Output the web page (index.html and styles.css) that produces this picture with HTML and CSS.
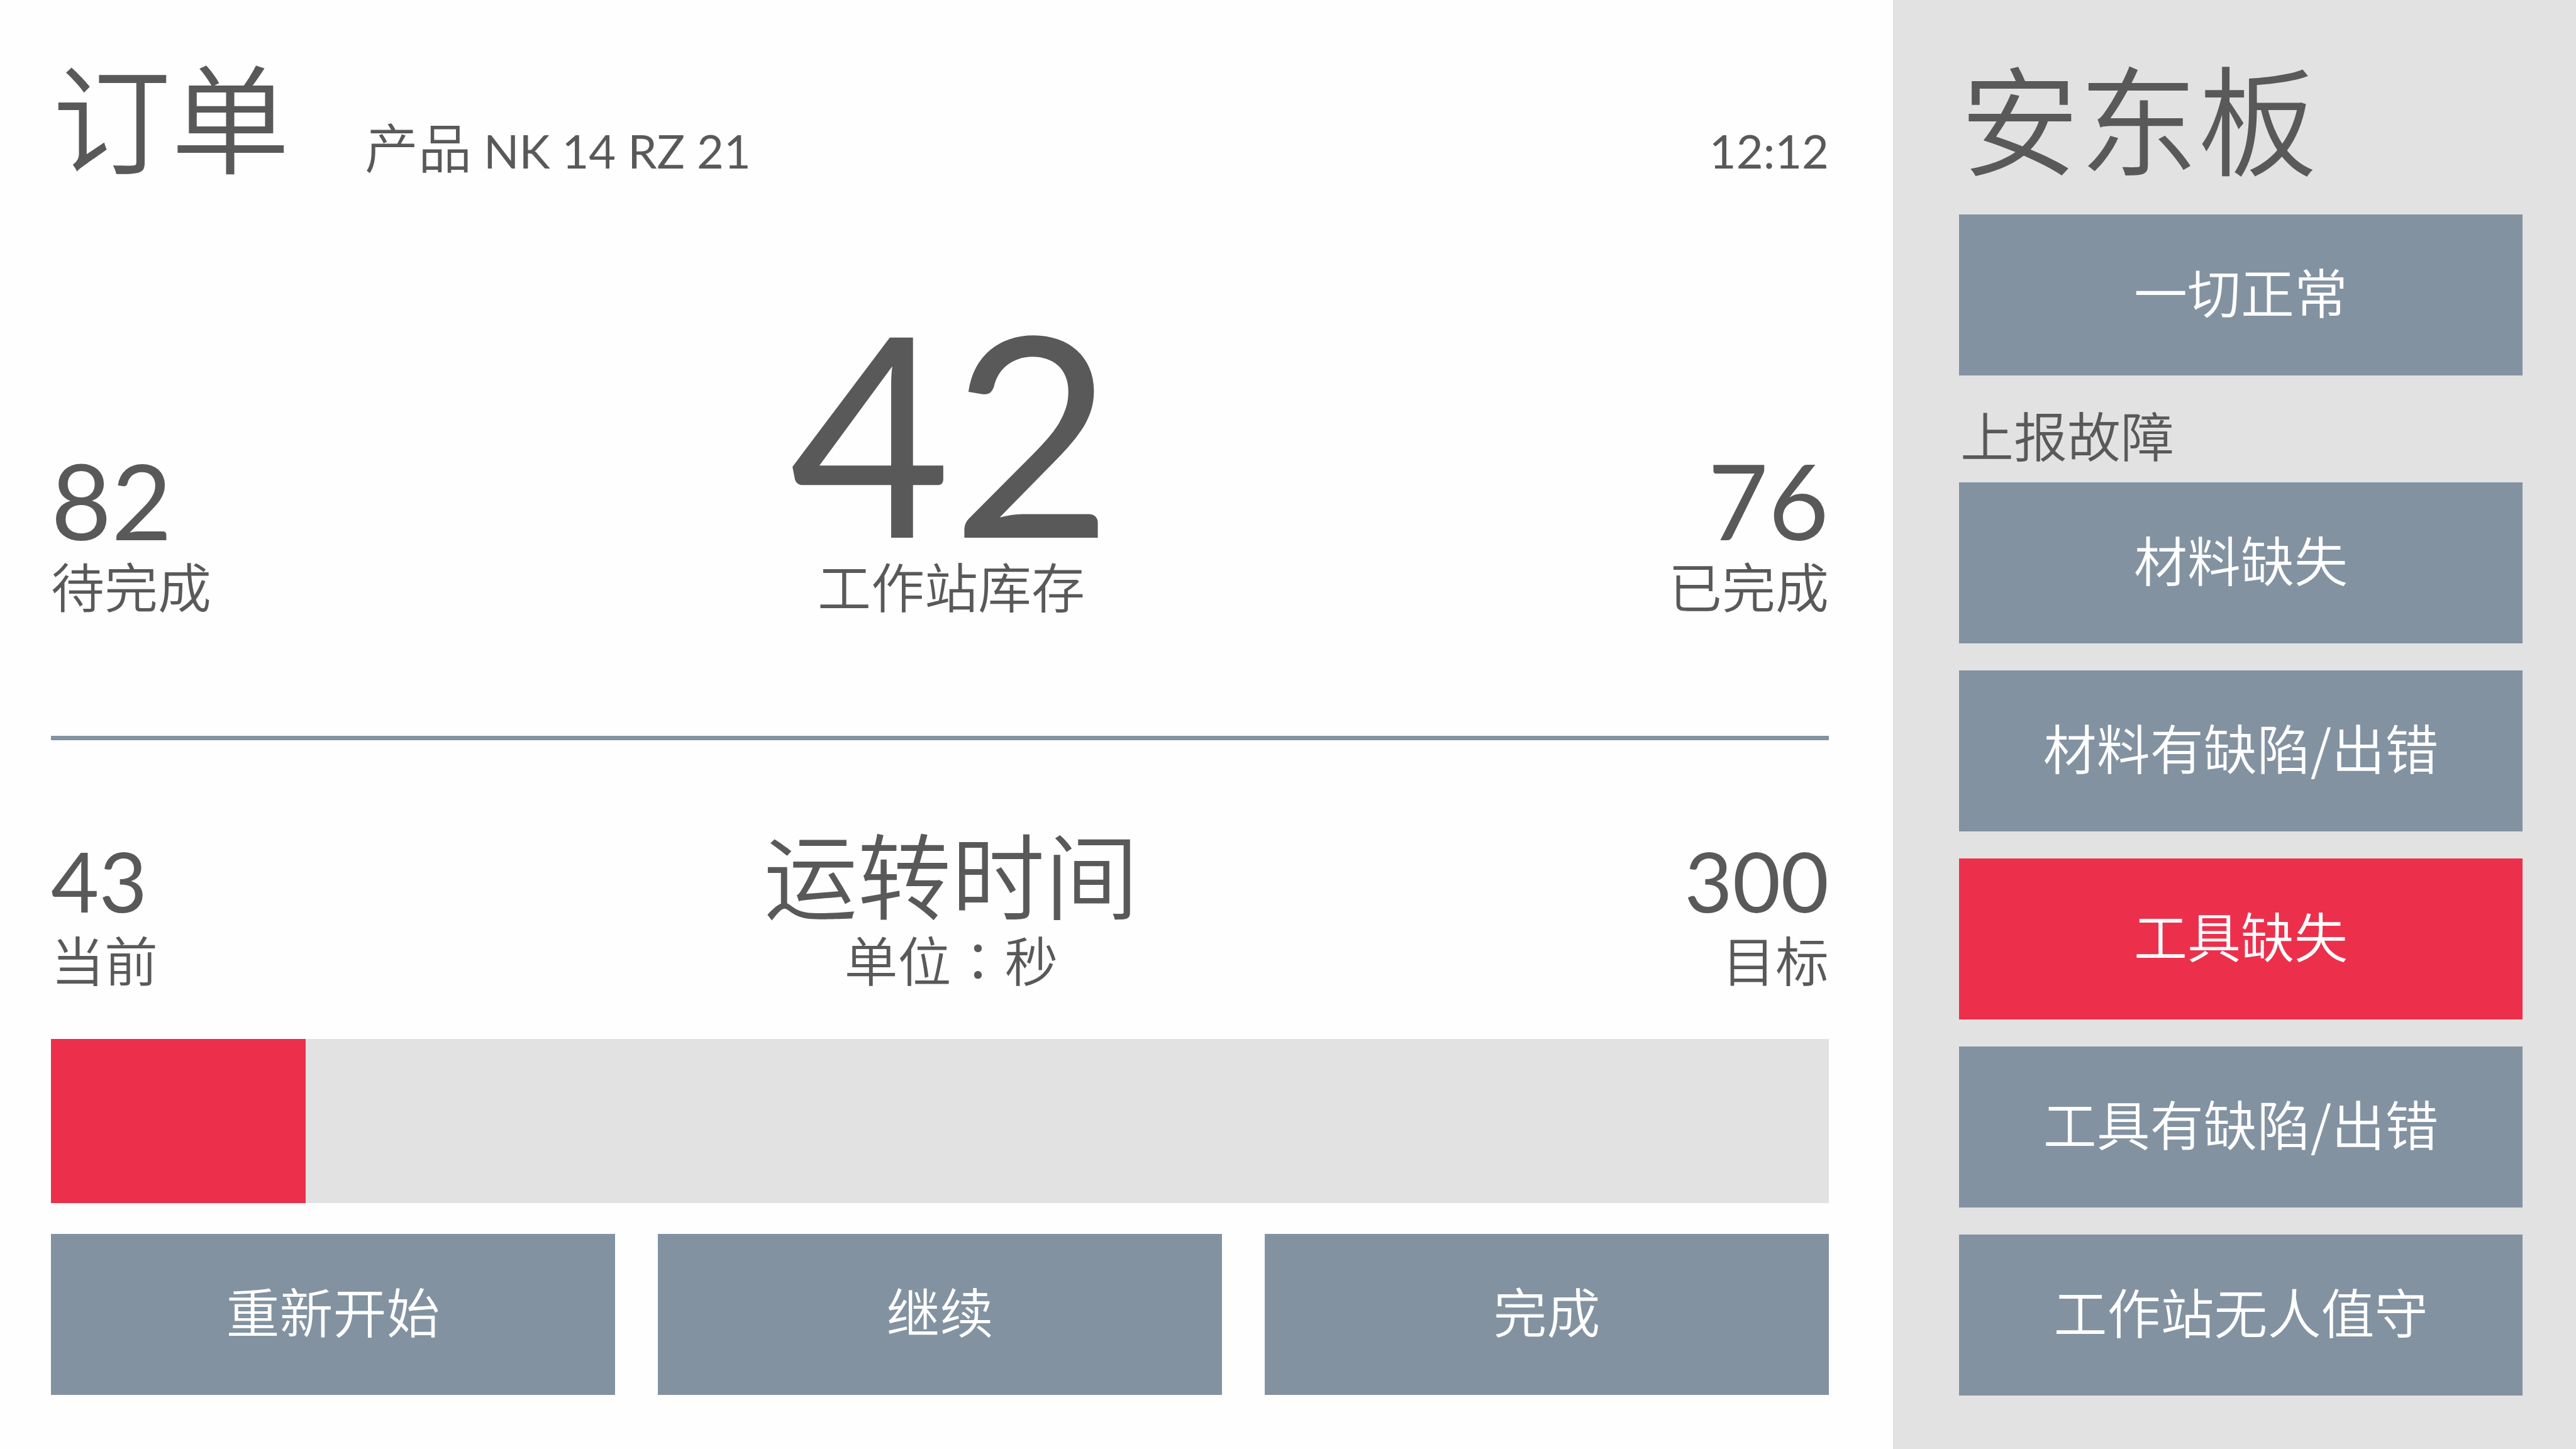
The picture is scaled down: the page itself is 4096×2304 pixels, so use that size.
FILE: index.html
```html
<!DOCTYPE html>
<html lang="zh-CN">
<head>
<meta charset="utf-8">
<meta name="viewport" content="width=device-width, initial-scale=1">
<title>订单</title>
<link rel="stylesheet" href="styles.css">
</head>
<body>
<div class="terminal">
  <main class="order">
    <header class="order-head">
      <h1 class="title">订单</h1>
      <p class="product">产品 <span class="code">NK 14 RZ 21</span></p>
      <time class="clock">12:12</time>
    </header>

    <section class="stats stock">
      <div class="stat">
        <span class="value">82</span>
        <span class="label">待完成</span>
      </div>
      <div class="stat stat-center">
        <span class="value value-hero">42</span>
        <span class="label">工作站库存</span>
      </div>
      <div class="stat stat-end">
        <span class="value">76</span>
        <span class="label">已完成</span>
      </div>
    </section>

    <hr class="divider">

    <section class="stats cycle">
      <div class="stat">
        <span class="value value-small">43</span>
        <span class="label">当前</span>
      </div>
      <div class="stat stat-center">
        <h2 class="subtitle" id="cycle-title">运转时间</h2>
        <span class="label">单位<span class="colon" lang="zh-Hant">：</span>秒</span>
      </div>
      <div class="stat stat-end">
        <span class="value value-small">300</span>
        <span class="label">目标</span>
      </div>
    </section>

    <progress class="cycle-bar" value="43" max="300" aria-labelledby="cycle-title"></progress>

    <div class="actions">
      <button class="btn" type="button">重新开始</button>
      <button class="btn" type="button">继续</button>
      <button class="btn" type="button">完成</button>
    </div>
  </main>

  <aside class="andon">
    <h2 class="title">安东板</h2>
    <button class="btn" type="button">一切正常</button>
    <h3 class="label andon-label">上报故障</h3>
    <div class="faults">
      <button class="btn" type="button">材料缺失</button>
      <button class="btn" type="button">材料有缺陷/出错</button>
      <button class="btn btn-alert" type="button" aria-pressed="true">工具缺失</button>
      <button class="btn" type="button">工具有缺陷/出错</button>
      <button class="btn" type="button">工作站无人值守</button>
    </div>
  </aside>
</div>
</body>
</html>
```
FILE: styles.css
```css
:root {
  --ink: #595959;
  --slate: #8292a1;
  --panel: #e2e2e2;
  --alert: #ec304c;
  --paper: #fefefe;
  --cjk: "Noto Sans CJK SC", sans-serif;
  --latin: Lato, "Noto Sans CJK SC", sans-serif;
}

* {
  box-sizing: border-box;
}

body {
  margin: 0;
  background: var(--paper);
  color: var(--ink);
  font-family: var(--cjk);
  font-size: 85px;
  font-weight: 350;
  line-height: 100px;
}

h1,
h2,
h3,
p {
  margin: 0;
  font-weight: 350;
}

.terminal {
  display: grid;
  grid-template-columns: minmax(0, 1fr) 1086px;
  min-height: 100vh;
}

.order {
  display: flex;
  flex-direction: column;
  padding: 70px 102px 86px 81px;
}

.order-head {
  display: flex;
  align-items: flex-end;
}

.title {
  padding-left: 2px;
  font-size: 189px;
  line-height: 220px;
}

.product {
  margin-left: 119px;
}

.code,
.clock {
  font-family: var(--latin);
  font-size: 74px;
  font-weight: 400;
}

.clock {
  margin-left: auto;
}

.stats {
  display: grid;
  grid-template-columns: 1fr auto 1fr;
  align-items: end;
}

.stock {
  margin-top: auto;
}

.stat {
  display: flex;
  flex-direction: column;
}

.stat-center {
  align-items: center;
  padding-left: 36px;
}

.stat-end {
  align-items: flex-end;
}

.value {
  font-family: var(--latin);
  font-size: 166px;
  font-weight: 400;
  line-height: 170px;
}

.value-hero {
  font-size: 444px;
  line-height: 392px;
}

.value-small {
  font-size: 132px;
  line-height: 148px;
}

.subtitle {
  font-size: 149px;
  line-height: 176px;
}

.label {
  font-size: 85px;
  line-height: 100px;
}

.colon {
  font-family: "Noto Sans CJK TC", sans-serif;
}

.divider {
  width: 100%;
  height: 7px;
  margin: 190px 0 121px;
  border: 0;
  background: var(--slate);
}

.cycle-bar {
  display: block;
  width: 100%;
  height: 261px;
  margin: 78px 0 49px;
  border: 0;
  appearance: none;
  background: var(--panel);
}

.cycle-bar::-webkit-progress-bar {
  background: var(--panel);
}

.cycle-bar::-webkit-progress-value {
  background: var(--alert);
}

.cycle-bar::-moz-progress-bar {
  background: var(--alert);
}

.actions {
  display: grid;
  grid-template-columns: repeat(3, 1fr);
  gap: 68px;
}

.btn {
  width: 100%;
  height: 256px;
  padding: 0 0 14px;
  border: 0;
  background: var(--slate);
  color: #fff;
  font: inherit;
  cursor: pointer;
}

.btn-alert {
  background: var(--alert);
}

.andon {
  padding: 73px 85px 84px 105px;
  background: var(--panel);
}

.andon .title {
  margin-bottom: 48px;
}

.andon-label {
  margin: 43px 0 27px;
  padding-left: 2px;
}

.faults {
  display: grid;
  gap: 43px;
}
```
